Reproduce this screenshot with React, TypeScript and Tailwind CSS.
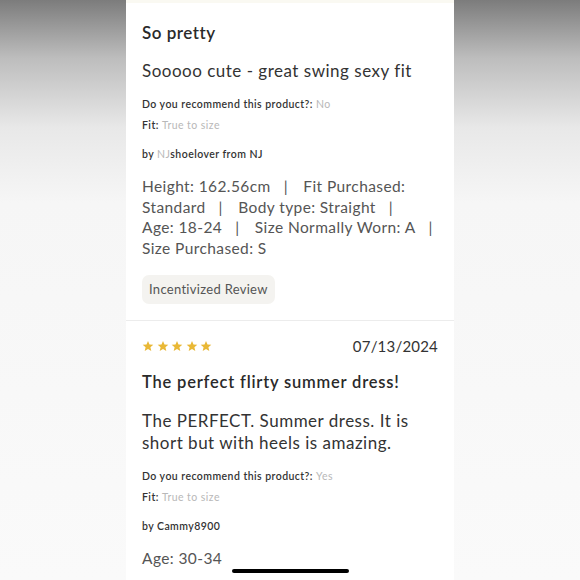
import React from "react";

const font = { fontFamily: "Lato, 'Open Sans', sans-serif" };

function Stars() {
  return (
    <div className="flex gap-[2.5px]">
      {[0, 1, 2, 3, 4].map((i) => (
        <svg key={i} width="12" height="12" viewBox="0 0 24 24">
          <path
            d="M12 1.8l3 7.1 7.6.6-5.8 5 1.8 7.5L12 18l-6.6 4 1.8-7.5-5.8-5 7.6-.6z"
            fill="#e9b836"
          />
        </svg>
      ))}
    </div>
  );
}

function Meta({ label, value }: { label: string; value: string }) {
  return (
    <p className="text-[10.5px] font-semibold leading-[14px] tracking-[0.45px] text-[#333]">
      {label} <span className="font-normal text-[#b8b8b8]">{value}</span>
    </p>
  );
}

function Attributes({ items }: { items: string[] }) {
  return (
    <p className="text-[15.5px] leading-[20.7px] tracking-[0.4px] text-[#555]">
      {items.map((t, i) => (
        <React.Fragment key={i}>
          {t}
          {i < items.length - 1 && (
            <>
              <span className="pl-[13px]">|</span>
              <span className="[word-spacing:11px]"> </span>
            </>
          )}
        </React.Fragment>
      ))}
    </p>
  );
}

export default function App() {
  return (
    <div
      className="relative flex h-[580px] w-[580px] justify-center overflow-hidden bg-[linear-gradient(to_bottom,#7c7c7c_0%,#bdbdbd_10%,#e8e8e8_22%,#f6f6f6_35%,#fafafa_100%)]"
      style={font}
    >
      <div className="w-[328px] shrink-0 bg-white">
        <div className="h-[3px] bg-[#faf9f2]" />
        <div className="px-4 pt-[19px]">
          <h2 className="text-[17px] font-semibold leading-[22px] tracking-[0.5px] text-[#2a2a2a]">So pretty</h2>
          <p className="mt-[16px] text-[17px] leading-[22px] tracking-[0.5px] text-[#333]">
            Sooooo cute - great swing sexy fit
          </p>
          <div className="mt-[15px]">
            <Meta label="Do you recommend this product?:" value="No" />
          </div>
          <div className="mt-[7px]">
            <Meta label="Fit:" value="True to size" />
          </div>
          <p className="mt-[15px] text-[10.5px] font-semibold leading-[14px] tracking-[0.45px] text-[#333]">
            by <span className="font-normal text-[#b8b8b8]">NJ</span>shoelover from NJ
          </p>
          <div className="mt-[15px]">
            <Attributes
              items={[
                "Height: 162.56cm",
                "Fit Purchased: Standard",
                "Body type: Straight",
                "Age: 18-24",
                "Size Normally Worn: A",
                "Size Purchased: S",
              ]}
            />
          </div>
          <div className="mt-[16px] inline-flex h-[29px] items-center rounded-[7px] bg-[#f4f3f0] px-[7px] text-[13px] tracking-[0.3px] text-[#555]">
            Incentivized Review
          </div>
        </div>
        <div className="mt-[16px] h-px bg-[#ececec]" />
        <div className="px-4 pt-[15px]">
          <div className="flex h-[20px] items-center justify-between">
            <Stars />
            <span className="text-[15px] tracking-[0.2px] text-[#333]">07/13/2024</span>
          </div>
          <h2 className="mt-[15px] text-[16.5px] font-semibold leading-[22px] tracking-[0.8px] text-[#2a2a2a]">
            The perfect flirty summer dress!
          </h2>
          <p className="mt-[17px] text-[17px] leading-[22px] tracking-[0.5px] text-[#333]">
            The PERFECT. Summer dress. It is short but with heels is amazing.
          </p>
          <div className="mt-[15px]">
            <Meta label="Do you recommend this product?:" value="Yes" />
          </div>
          <div className="mt-[7px]">
            <Meta label="Fit:" value="True to size" />
          </div>
          <p className="mt-[15px] text-[10.5px] font-semibold leading-[14px] tracking-[0.45px] text-[#333]">
            by Cammy8900
          </p>
          <div className="mt-[15px]">
            <Attributes items={["Age: 30-34"]} />
          </div>
        </div>
      </div>
      <div className="absolute bottom-[7px] left-[232px] h-[4px] w-[117px] rounded-full bg-black" />
    </div>
  );
}
